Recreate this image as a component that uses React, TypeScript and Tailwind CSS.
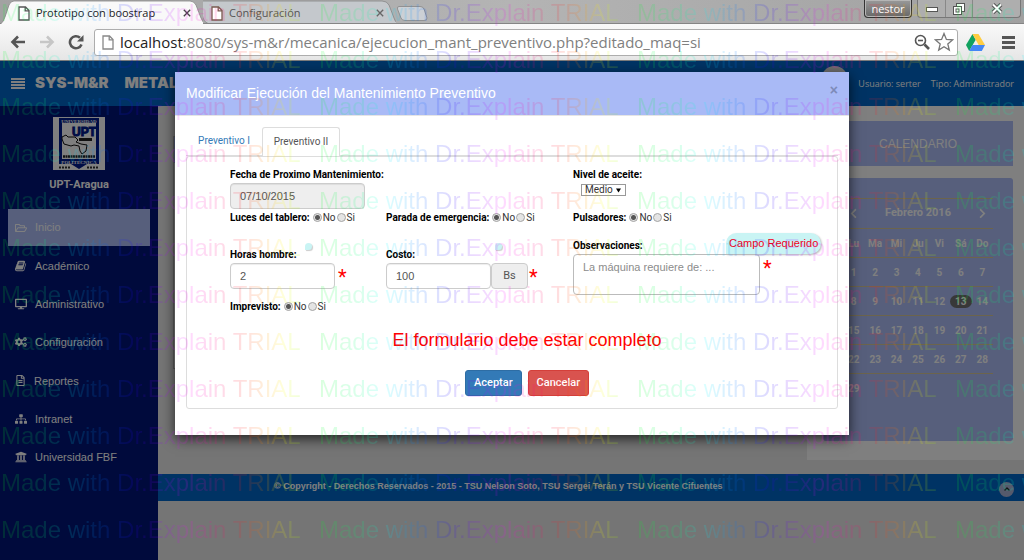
import { useState } from "react";
import type { ReactNode } from "react";
import {
  FaRegFolderOpen,
  FaDesktop,
  FaCogs,
  FaRegFileAlt,
  FaSitemap,
  FaUniversity,
  FaChevronLeft,
  FaChevronRight,
  FaUser,
} from "react-icons/fa";
import { ChevronUp } from "lucide-react";

function PageIcon({ className }: { className: string }) {
  return (
    <svg viewBox="0 0 12 15" className={className} fill="#fff" stroke="currentColor" strokeWidth="1.3">
      <path d="M1 1h6.500L11 4.500V14H1z" />
      <path d="M7.200 1v3.800H11" fill="none" />
    </svg>
  );
}

function CloseGlyph({ className }: { className: string }) {
  return (
    <svg viewBox="0 0 10 10" className={className} stroke="currentColor" strokeWidth="1.700">
      <path d="M1 1l8 8M9 1L1 9" />
    </svg>
  );
}

function BookIcon() {
  return (
    <svg viewBox="0 0 1792 1792" fill="currentColor" className="h-3 w-3">
      <path d="M1639 478q40 57 18 129l-275 906q-19 64-76.500 107.500t-122.500 43.500h-923q-77 0-148.500-53.500t-99.500-131.500q-24-67-2-127 0-4 3-27t4-37q1-8-3-21.500t-3-19.500q2-11 8-21t16.500-23.500 16.500-23.500q23-38 45-91.500t30-91.500q3-10 .5-30t-.5-28q3-11 17-28t17-23q21-36 42-92t25-90q1-9-2.500-32t.5-28q4-13 22-30.500t22-22.500q19-26 42.500-84.500t27.500-96.500q1-8-3-25.500t-2-26.500q2-8 9-18t18-23 17-21q8-12 16.500-30.500t15-35 16-36 19.500-32 26.500-23.500 36-11.500 47.500 5.500l-1 3q38-9 51-9h761q74 0 114 56t18 130l-274 906q-36 119-71.500 153.500t-128.500 34.500h-869q-27 0-38 15-11 16-1 43 24 70 144 70h923q29 0 56-15.500t35-41.500l300-987q7-22 5-57 38 15 59 43zm-1064 2q-4 13 2 22.500t20 9.500h608q13 0 25.500-9.500t16.500-22.500l21-64q4-13-2-22.500t-20-9.500h-608q-13 0-25.500 9.500t-16.500 22.500zm-83 256q-4 13 2 22.500t20 9.500h608q13 0 25.500-9.500t16.500-22.500l21-64q4-13-2-22.500t-20-9.500h-608q-13 0-25.500 9.500t-16.500 22.500z" />
    </svg>
  );
}

function UptLogo() {
  return (
    <svg viewBox="0 0 52 53" className="h-[53px] w-[52px]" role="img" aria-label="UPT Aragua">
      <rect width="52" height="53" fill="#fff" />
      <path d="M6 1h40v46H34l-8 5-8-5H6z" fill="#001a8c" />
      <path d="M9 6h34v36H9z" fill="#fff" />
      <text x="26" y="5.500" fontSize="5" fontWeight="700" textAnchor="middle" fill="#fff" fontFamily="Liberation Serif">UNIVERSIDAD</text>
      <text x="31" y="19" fontSize="12" fontWeight="700" textAnchor="middle" fill="#001a8c" stroke="#001a8c" strokeWidth="1" fontFamily="Liberation Sans">UPT</text>
      <rect x="26" y="21" width="13" height="3" fill="#222" />
      <path d="M9 20l4-2 2 2 7 0 3 3-2 2 5 2 6 1-1 6-4 3-2-3-1-5-5-1-3 1-7-2-2-5z" fill="#fff" stroke="#111" strokeWidth="1" />
      <path d="M10 39.500h32" stroke="#222" strokeWidth="2.500" strokeDasharray="2 0.500" />
      <text x="26" y="46.500" fontSize="5" fontWeight="700" textAnchor="middle" fill="#fff" fontFamily="Liberation Serif">POLITECNICA</text>
      <path d="M6 50.500h11M34 50.500h12" stroke="#333" strokeWidth="2" strokeDasharray="2 1" />
    </svg>
  );
}

function BrowserChrome() {
  return (
    <div className="shrink-0 border-b border-[#7b7b7b] bg-[#f3f3f3] font-['Open_Sans',sans-serif]">
      <div className="flex h-6 items-start justify-between border-b border-[#858585] bg-linear-to-r from-[#a2a2a2] via-[#b4b4b4] to-[#a0a0a0]">
        <div className="flex h-6">
          <button className="relative flex h-6 w-[203px] items-center pt-[2px] text-[11px] text-[#222]">
            <svg viewBox="0 0 203 24" className="absolute inset-0 h-6 w-[203px]" preserveAspectRatio="none">
              <path d="M0 24.500Q3 23 5 17L9 5Q10.500 1 14 1H190Q194 1 196 5L201 18Q203 23 206 24.500z" fill="#f9f9f9" stroke="#858585" strokeWidth="0.800" />
            </svg>
            <PageIcon className="relative ml-[18px] h-[15px] w-3 shrink-0 text-[#555]" />
            <span className="relative ml-[6px] flex-1 text-left whitespace-nowrap">Prototipo con boostrap</span>
            <CloseGlyph className="relative mr-3 h-2 w-2 shrink-0 text-[#444]" />
          </button>
          <button className="relative flex h-6 w-[193px] items-center pt-[2px] text-[11px] text-[#555]">
            <svg viewBox="0 0 193 23" className="absolute inset-0 h-[23px] w-[193px]" preserveAspectRatio="none">
              <path d="M-4 1H179Q184 1 186 5L191 18Q192 22 195 23.500H5Q1 22 0 18z" fill="#c4c8cc" stroke="#858585" strokeWidth="0.800" />
            </svg>
            <PageIcon className="relative ml-[8px] h-[15px] w-3 shrink-0 text-[#7a5a50]" />
            <span className="relative ml-[6px] flex-1 text-left whitespace-nowrap">Configuración</span>
            <CloseGlyph className="relative mr-3 h-2 w-2 shrink-0 text-[#666]" />
          </button>
          <button aria-label="Nueva pestaña" className="mt-[6px] h-[15px] w-8">
            <svg viewBox="0 0 32 15" className="h-[15px] w-8">
              <path d="M3 .5H24Q27 .5 28 3L31 12Q31 14.500 28 14.500H9Q6 14.500 5 12L1.500 3Q1 .5 3 .5z" fill="#ccd0d5" stroke="#858585" strokeWidth="0.800" />
            </svg>
          </button>
        </div>
        <div className="flex pr-[3px]">
          <button className="mr-[5px] h-[18px] w-12 rounded-b-[4px] border border-t-0 border-[#333] bg-linear-to-b from-[#9a9a9a] to-[#686868] text-[11px] leading-4 text-white shadow-[inset_0_0_0_1px_#b5b5b5]">
            nestor
          </button>
          <div className="flex h-[18px] divide-x divide-[#888] rounded-b-[4px] border border-t-0 border-[#777] bg-[#aeaeae]">
            <button aria-label="Minimizar" className="flex w-[28px] items-center justify-center">
              <svg viewBox="0 0 12 6" className="h-[6px] w-3"><rect x=".5" y="1.500" width="11" height="4" fill="#fff" stroke="#555" /></svg>
            </button>
            <button aria-label="Restaurar" className="flex w-[27px] items-center justify-center">
              <svg viewBox="0 0 12 12" className="h-3 w-3" fill="#fff" stroke="#555"><rect x="3.500" y=".5" width="8" height="8" /><rect x=".5" y="3.500" width="8" height="8" /><rect x="3" y="6" width="3" height="3" /></svg>
            </button>
            <button aria-label="Cerrar ventana" className="flex w-[47px] items-center justify-center">
              <svg viewBox="0 0 12 11" className="h-[11px] w-3"><path d="M2 1.500l8 8M10 1.500l-8 8" stroke="#555" strokeWidth="4" /><path d="M2 1.500l8 8M10 1.500l-8 8" stroke="#fff" strokeWidth="2" /></svg>
            </button>
          </div>
        </div>
      </div>
      <div className="flex h-9 items-center bg-linear-to-b from-[#f9f9f9] to-[#e6e6e6] pr-2 pl-[10px]">
        <button aria-label="Atrás" className="w-4 text-[#555]">
          <svg viewBox="0 0 16 14" className="h-[14px] w-4" fill="none" stroke="currentColor" strokeWidth="2.600"><path d="M15 7H2.500M8 1.500L2.500 7 8 12.500" /></svg>
        </button>
        <button aria-label="Adelante" className="ml-[13px] w-4 text-[#c6c6c6]">
          <svg viewBox="0 0 16 14" className="h-[14px] w-4" fill="none" stroke="currentColor" strokeWidth="2.600"><path d="M1 7h12.500M8 1.500L13.500 7 8 12.500" /></svg>
        </button>
        <button aria-label="Recargar" className="ml-[13px] w-4 text-[#555]">
          <svg viewBox="0 0 16 16" className="h-4 w-4" fill="none" stroke="currentColor" strokeWidth="2.600"><path d="M13.500 10.500A6 6 0 1 1 12 3.800" /><path d="M15.500 1v6.500H9z" fill="currentColor" stroke="none" /></svg>
        </button>
        <div className="ml-[10px] flex h-[27px] flex-1 items-center rounded-[3px] border border-[#adadad] bg-white pr-[3px] pl-[7px]">
          <PageIcon className="h-[15px] w-3 shrink-0 text-[#888]" />
          <p className="ml-[6px] flex-1 text-[15px] leading-6 whitespace-nowrap text-[#808080]">
            <span className="text-[#222]">localhost</span>:8080/sys-m&amp;r/mecanica/ejecucion_mant_preventivo.php?editado_maq=si
          </p>
          <button aria-label="Zoom">
            <svg viewBox="0 0 16 16" className="h-4 w-4" fill="none" stroke="#555" strokeWidth="1.600"><circle cx="6.500" cy="6.500" r="5" /><path d="M4 6.500h5" /><path d="M10.500 10.500l4.500 4.500" strokeWidth="2.600" /></svg>
          </button>
          <button aria-label="Marcador" className="ml-1">
            <svg viewBox="0 0 20 20" className="h-5 w-5" fill="#fff" stroke="#777" strokeWidth="1.300"><path d="M10 1.500l2.400 5.900 6.100.5-4.700 4 1.500 6.200L10 14.700l-5.300 3.400 1.500-6.200-4.700-4 6.100-.5z" /></svg>
          </button>
        </div>
        <button aria-label="Google Drive" className="ml-2">
          <svg viewBox="0 0 19 17" className="h-[17px] w-[19px]"><path d="M6.500 0L0 11l3.200 6L9.700 5.700z" fill="#11a15f" /><path d="M6.500 0h6L19 11h-6.300z" fill="#ffcd41" /><path d="M3.200 17l3.300-6H19l-3.200 6z" fill="#4387f5" /></svg>
        </button>
        <button aria-label="Menú" className="mr-px ml-[17px]">
          <svg viewBox="0 0 13 13" className="h-[13px] w-[13px]" fill="#555"><path d="M0 0h13v3H0zM0 5h13v3H0zM0 10h13v3H0z" /></svg>
        </button>
      </div>
    </div>
  );
}

const menu: { label: string; icon: ReactNode }[] = [
  { label: "Inicio", icon: <FaRegFolderOpen size={12} /> },
  { label: "Académico", icon: <BookIcon /> },
  { label: "Administrativo", icon: <FaDesktop size={12} /> },
  { label: "Configuración", icon: <FaCogs size={12} /> },
  { label: "Reportes", icon: <FaRegFileAlt size={11} /> },
  { label: "Intranet", icon: <FaSitemap size={12} /> },
  { label: "Universidad FBF", icon: <FaUniversity size={12} /> },
];

function Sidebar() {
  return (
    <nav className="flex w-[158px] shrink-0 flex-col items-center bg-[#001478] px-2 pt-[11px]">
      <UptLogo />
      <p className="mt-[7px] font-['Roboto',sans-serif] text-[11px] leading-4 font-bold text-white">UPT-Aragua</p>
      <ul className="mt-4 flex h-[267px] w-full flex-col justify-between">
        {menu.map((m, i) => (
          <li key={m.label}>
            <a
              href="#"
              className={
                i === 0
                  ? "flex h-[37px] items-center gap-2 bg-[#aebef8] pl-[7px] text-[11px] text-white"
                  : "flex h-[37px] items-center gap-2 pl-[7px] text-[11px] text-white"
              }
            >
              {m.icon}
              {m.label}
            </a>
          </li>
        ))}
      </ul>
    </nav>
  );
}

const weeks = [
  ["1", "2", "3", "4", "5", "6", "7"],
  ["8", "9", "10", "11", "12", "13", "14"],
  ["15", "16", "17", "18", "19", "20", "21"],
  ["22", "23", "24", "25", "26", "27", "28"],
  ["29", "", "", "", "", "", ""],
];

function CalendarAside() {
  return (
    <aside className="w-[217px] shrink-0 self-start bg-white pt-[15px] pr-[11px] pb-[19px] pl-4">
      <h2 className="flex h-[45px] items-center justify-center bg-[#aebef8] text-[12px] text-white">CALENDARIO</h2>
      <div className="mt-3 rounded-[3px] bg-[#aebef8] px-5 pt-5 pb-[38px]">
        <table className="w-full table-fixed text-center font-['Roboto',sans-serif] text-[10px] font-bold text-white">
          <thead>
            <tr className="h-[30px] border-t border-[#d8c898] text-[11px]">
              <th><button aria-label="Mes anterior" className="align-middle"><FaChevronLeft size={11} /></button></th>
              <th colSpan={5}>Febrero 2016</th>
              <th><button aria-label="Mes siguiente" className="align-middle"><FaChevronRight size={11} /></button></th>
            </tr>
            <tr className="h-[29px] border-t border-[#d8c898]">
              {["Lu", "Ma", "Mi", "Ju", "Vi", "Sá", "Do"].map((d) => (
                <th key={d}>{d}</th>
              ))}
            </tr>
          </thead>
          <tbody>
            {weeks.map((w) => (
              <tr key={w[0]} className="h-[29px] border-t border-[#d8c898]">
                {w.map((d, i) => (
                  <td key={i} className="p-0">
                    {d === "13" ? <span className="block rounded-full bg-[#707070] leading-[13px]">{d}</span> : d}
                  </td>
                ))}
              </tr>
            ))}
          </tbody>
        </table>
      </div>
    </aside>
  );
}

function RadioPair({ name, label }: { name: string; label: string }) {
  const [value, setValue] = useState("No");
  return (
    <fieldset className="flex h-3 items-center whitespace-nowrap">
      <legend className="float-left mr-[3px] font-bold text-black">{label}</legend>
      {["No", "Si"].map((o) => (
        <label key={o} className="flex items-center gap-px pr-px">
          <input
            type="radio"
            name={name}
            checked={value === o}
            onChange={() => setValue(o)}
            className="mb-[2px] h-[9px] w-[9px] appearance-none rounded-full border border-[#a4a4a4] bg-[#e4e4e4] checked:bg-[radial-gradient(circle,#555_0_2px,#e4e4e4_3px)]"
          />
          {o}
        </label>
      ))}
    </fieldset>
  );
}

const fieldClass = "h-[26px] rounded-[4px] border border-[#ccc] px-[9px] text-[11px] text-[#555] shadow-[inset_0_1px_1px_rgba(0,0,0,0.075)]";

function Required() {
  return <span className="ml-[3px] h-[26px] text-[20px] leading-[28px] text-[#f00]">*</span>;
}

function MaintenanceDialog() {
  return (
    <div role="dialog" aria-labelledby="dlg-title" className="w-full max-w-[674px] bg-white pb-[26px] shadow-[0_4px_12px_rgba(0,0,0,0.7)]">
      <header className="flex h-11 items-center justify-between border-b border-[#e5e5e5] bg-[#a9baf6] px-[11px]">
        <h1 id="dlg-title" className="mb-[2px] text-[14px] leading-4 text-white">Modificar Ejecución del Mantenimiento Preventivo</h1>
        <button aria-label="Cerrar" className="mb-2 text-[14px] leading-4 font-bold text-[#7d8ab8]">×</button>
      </header>
      <div className="px-[11px] pt-[11px] font-['Roboto',sans-serif] text-[10px] leading-3">
        <div role="tablist" className="flex h-[29px] border-b border-[#ddd]">
          <button role="tab" aria-selected="false" className="w-[76px] text-[#337ab7]">Preventivo I</button>
          <button role="tab" aria-selected="true" className="-mb-px w-[78px] rounded-t-[3px] border border-b-0 border-[#ddd] bg-white text-[#555]">Preventivo II</button>
        </div>
        <form className="rounded-[3px] border border-[#ddd] pt-3 pb-3 text-[#333]" onSubmit={(e) => e.preventDefault()}>
          <div className="grid grid-cols-[156px_187px_1fr] pl-[43px]">
            <div className="col-span-2 flex flex-col items-start">
              <label htmlFor="fecha" className="mb-[2px] font-bold text-black">Fecha de Proximo Mantenimiento:</label>
              <input id="fecha" readOnly defaultValue="07/10/2015" className={`${fieldClass} w-[135px] bg-[#eee] font-['Liberation_Sans',sans-serif]`} />
            </div>
            <div className="flex flex-col items-start">
              <label htmlFor="nivel" className="mb-[3px] font-bold text-black">Nivel de aceite:</label>
              <div className="relative ml-2">
                <select id="nivel" className="block h-3 w-[45px] appearance-none border border-[#999] bg-white pl-[3px] leading-[10px]">
                  <option>Medio</option>
                  <option>Alto</option>
                  <option>Bajo</option>
                </select>
                <svg viewBox="0 0 6 5" className="pointer-events-none absolute top-[4px] right-[5px] h-[5px] w-[5px]"><path d="M0 0h6L3 5z" /></svg>
              </div>
            </div>

            <div className="mt-[3px]"><RadioPair name="luces" label="Luces del tablero:" /></div>
            <div className="mt-[3px]"><RadioPair name="parada" label="Parada de emergencia:" /></div>
            <div className="mt-[3px]"><RadioPair name="pulsadores" label="Pulsadores:" /></div>

            <div className="relative mt-[15px] pt-[10px]">
              <label htmlFor="horas" className="mb-[2px] block font-bold text-black">Horas hombre:</label>
              <div className="flex">
                <input id="horas" defaultValue="2" className={`${fieldClass} w-[105px] bg-white font-['Liberation_Sans',sans-serif]`} />
                <Required />
              </div>
              <span className="absolute top-1 left-[75px] h-[7px] w-[7px] rounded-full rounded-bl-none bg-[#c9f4f4] shadow-[1px_1px_1px_#ccc]" />
            </div>
            <div className="relative mt-[15px] pt-[10px]">
              <label htmlFor="costo" className="mb-[2px] block font-bold text-black">Costo:</label>
              <div className="flex">
                <input id="costo" defaultValue="100" className={`${fieldClass} w-[105px] bg-white font-['Liberation_Sans',sans-serif]`} />
                <span className="flex h-[26px] w-[37px] items-center justify-center rounded-[4px] border border-[#ccc] bg-[#eee] text-[11px] text-[#555]">Bs</span>
                <span className="-ml-[2px] flex"><Required /></span>
              </div>
              <span className="absolute top-1 left-[109px] h-[7px] w-[7px] rounded-full rounded-bl-none bg-[#c9f4f4] shadow-[1px_1px_1px_#ccc]" />
            </div>
            <div className="relative mt-[15px] pt-px">
              <label htmlFor="obs" className="mb-[2px] block font-bold text-black">Observaciones:</label>
              <div className="flex">
                <textarea
                  id="obs"
                  placeholder="La máquina requiere de: ..."
                  className="h-[41px] w-[187px] resize-none rounded-[4px] border border-[#bbb] px-[9px] py-1 font-['Liberation_Sans',sans-serif] text-[11px] leading-4 placeholder:text-[#8c8c8c]"
                />
                <Required />
              </div>
              <span className="absolute -top-[6px] left-[153px] rounded-[11px] rounded-bl-none bg-[#c9f4f4] px-[3px] font-['Liberation_Sans',sans-serif] text-[11px] leading-[21px] whitespace-nowrap text-[#f0001c] shadow-[1px_1px_2px_#bbb]">
                Campo Requerido
              </span>
            </div>

            <div className="mt-[6px]"><RadioPair name="imprevisto" label="Imprevisto:" /></div>
          </div>
          <p className="mt-[15px] pl-[30px] text-center font-['Liberation_Sans',sans-serif] text-[18px] leading-6 text-[#f00]">El formulario debe estar completo</p>
          <div className="mt-[18px] flex justify-center gap-[6px] pl-[30px] text-[11px] font-medium text-white">
            <button type="submit" className="h-[26px] rounded-[3px] border border-[#2e6da4] bg-[#337ab7] px-2">Aceptar</button>
            <button type="button" className="h-[26px] rounded-[3px] border border-[#d43f3a] bg-[#d9534f] px-2">Cancelar</button>
          </div>
        </form>
      </div>
    </div>
  );
}

function TrialWatermark() {
  return (
    <div aria-hidden="true" className="pointer-events-none absolute inset-0 z-20 overflow-hidden text-[24px] leading-[47px] whitespace-nowrap opacity-[0.14]">
      {Array.from({ length: 12 }, (_, r) => (
        <div key={r} className="-mt-[11px] mb-[11px] flex pl-px">
          {Array.from({ length: 4 }, (_, c) => (
            <div key={c} className="w-[318px] shrink-0">
              <span className="bg-[linear-gradient(90deg,#00ff20,#00ff80_14%,#00ffff_22%,#0080ff_32%,#2000ff_44%,#8000ff_52%,#ff00ff_62%,#ff0080_72%,#ff2020_80%,#ff8000_87%,#ffff00_94%,#a0ff00)] bg-clip-text text-transparent">
                Made with Dr.Explain TRIAL
              </span>
            </div>
          ))}
        </div>
      ))}
    </div>
  );
}

export default function App() {
  return (
    <div className="relative flex min-h-screen flex-col overflow-hidden font-['Liberation_Sans',Arial,sans-serif]">
      <BrowserChrome />
      <div className="relative flex flex-1 flex-col bg-[#eaeaea]">
        <header className="flex h-[45px] shrink-0 items-center justify-between bg-[#0066c8] pr-[10px] pl-[11px] text-white">
          <div className="flex items-center">
            <button aria-label="Menú principal">
              <svg viewBox="0 0 14 11" className="h-[11px] w-[14px]" fill="currentColor"><path d="M0 0h14v2H0zM0 3h14v2H0zM0 6h14v2H0zM0 9h14v2H0z" /></svg>
            </button>
            <p className="ml-[10px] flex gap-4 font-['Inter',sans-serif] text-[15px] font-black">
              <span>SYS-M&amp;R</span>
              <span>METALMECANICA</span>
            </p>
          </div>
          <div className="flex items-center gap-[10px] font-['Open_Sans',sans-serif] text-[9px]">
            <span className="mb-2 flex h-[27px] w-[27px] items-end justify-center overflow-hidden rounded-full bg-[#ddd] text-[#555]">
              <FaUser size={18} />
            </span>
            <span>Usuario: serter</span>
            <span>Tipo: Administrador</span>
          </div>
        </header>
        <div className="flex flex-1">
          <Sidebar />
          <div className="flex min-w-0 flex-1 flex-col">
            <div className="flex">
              <main className="min-w-0 flex-1 px-[15px] pt-[30px]">
                <div className="h-[233px] border border-[#bbb] bg-white">
                  <div className="h-[26px] bg-[#aebef8]" />
                </div>
              </main>
              <CalendarAside />
            </div>
            <footer className="relative mt-[14px] flex h-[27px] items-center bg-[#0066c8] pr-[17px] pl-[116px] text-[9px] font-bold text-white">
              © Copyright - Derechos Reservados - 2015 - TSU Nelson Soto, TSU Sergei Terán y TSU Vicente Cifuentes
              <a href="#" aria-label="Subir" className="absolute top-2 right-[10px] flex h-[15px] w-[15px] items-center justify-center rounded-full bg-[#aab4d8] text-[#222]">
                <ChevronUp size={8} strokeWidth={4} />
              </a>
            </footer>
          </div>
        </div>
        <div className="absolute inset-0 flex items-start justify-center bg-black/50 pt-[11px]">
          <MaintenanceDialog />
        </div>
      </div>
      <TrialWatermark />
    </div>
  );
}
